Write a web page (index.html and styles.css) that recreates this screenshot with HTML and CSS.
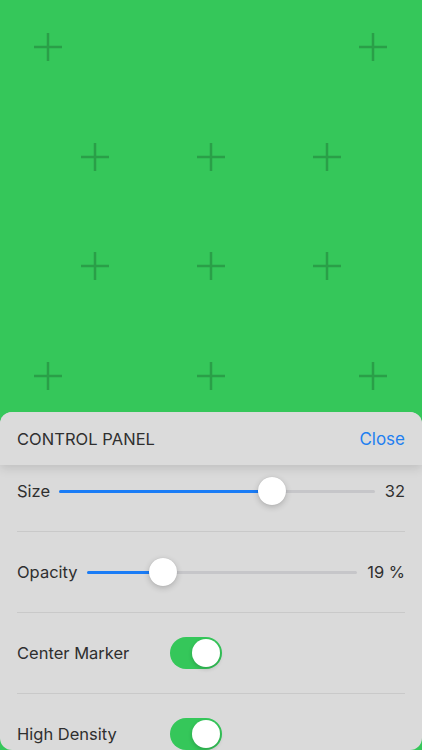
FILE: index.html
```html
<!DOCTYPE html>
<html>
<head>
<meta charset="utf-8">
<link rel="stylesheet" href="styles.css">
</head>
<body>
<div class="screen">
  <svg class="canvas" width="422" height="412" viewBox="0 0 422 412">
    <g class="plus">
      <path d="M34 47h28M48 33v28"/>
      <path d="M359 47h28M373 33v28"/>
      <path d="M81 157h28M95 143v28"/>
      <path d="M197 157h28M211 143v28"/>
      <path d="M313 157h28M327 143v28"/>
      <path d="M81 266h28M95 252v28"/>
      <path d="M197 266h28M211 252v28"/>
      <path d="M313 266h28M327 252v28"/>
      <path d="M34 376h28M48 362v28"/>
      <path d="M197 376h28M211 362v28"/>
      <path d="M359 376h28M373 362v28"/>
    </g>
  </svg>
  <div class="panel">
    <div class="header">
      <span class="title">CONTROL PANEL</span>
      <span class="close">Close</span>
    </div>
    <div class="rows">
      <div class="row row-first">
        <span class="label">Size</span>
        <div class="slider">
          <div class="track"><div class="fill" style="width:67.4%"></div></div>
          <div class="thumb" style="left:67.4%"></div>
        </div>
        <span class="value">32</span>
      </div>
      <div class="row">
        <span class="label">Opacity</span>
        <div class="slider">
          <div class="track"><div class="fill" style="width:28.2%"></div></div>
          <div class="thumb" style="left:28.2%"></div>
        </div>
        <span class="value">19 %</span>
      </div>
      <div class="row">
        <span class="label label-fixed">Center Marker</span>
        <div class="toggle"><div class="knob"></div></div>
      </div>
      <div class="row row-last">
        <span class="label label-fixed">High Density</span>
        <div class="toggle"><div class="knob"></div></div>
      </div>
    </div>
  </div>
</div>
</body>
</html>
```

FILE: styles.css
```css
html, body {
  margin: 0;
  padding: 0;
}
body {
  background: #35c75a;
  font-family: "Inter", "Liberation Sans", sans-serif;
  color: #2f2f2f;
}
.screen {
  width: 422px;
  height: 750px;
  overflow: hidden;
  display: flex;
  flex-direction: column;
}
.canvas {
  display: block;
  flex: none;
}
.plus path {
  stroke: #2a9f48;
  stroke-width: 2.5;
  fill: none;
}
.panel {
  flex: none;
  height: 338px;
  background: #dadada;
  border-radius: 12px;
  overflow: hidden;
  display: flex;
  flex-direction: column;
}
.header {
  position: relative;
  z-index: 1;
  height: 53px;
  flex: none;
  display: flex;
  align-items: center;
  justify-content: space-between;
  padding: 0 17px;
  background: #dbdbdb;
  box-shadow: 0 3px 10px rgba(0, 0, 0, 0.13);
  font-size: 16.5px;
}
.title {
  color: #2f2f2f;
  letter-spacing: 0.05px;
}
.close {
  color: #1f7ff0;
  font-size: 17px;
}
.rows {
  padding: 0 17px;
  display: flex;
  flex-direction: column;
}
.row {
  height: 80px;
  display: flex;
  align-items: center;
  border-bottom: 1px solid #c9c9c9;
  font-size: 16.5px;
}
.row-first {
  height: 66px;
  align-items: flex-start;
}
.row-first > * {
  margin-top: 14px;
}
.row-first .slider {
  margin-top: 12px;
}
.row-last {
  border-bottom: none;
}
.label {
  flex: none;
  line-height: 24px;
}
.label-fixed {
  width: 153px;
}
.value {
  flex: none;
  line-height: 24px;
}
.slider {
  flex: 1;
  position: relative;
  height: 28px;
  margin: 0 10px 0 9px;
  display: flex;
  align-items: center;
}
.track {
  width: 100%;
  height: 3px;
  border-radius: 2px;
  background: #c6c6c9;
  overflow: hidden;
}
.fill {
  height: 100%;
  background: #1a7cf6;
}
.thumb {
  position: absolute;
  top: 0;
  width: 28px;
  height: 28px;
  margin-left: -14px;
  border-radius: 50%;
  background: #ffffff;
  box-shadow: 0 2px 6px rgba(0, 0, 0, 0.2), 0 0 1px rgba(0, 0, 0, 0.15);
}
.toggle {
  width: 52px;
  height: 32px;
  border-radius: 16px;
  background: #35c75a;
  position: relative;
  flex: none;
}
.knob {
  position: absolute;
  right: 2px;
  top: 2px;
  width: 28px;
  height: 28px;
  border-radius: 50%;
  background: #ffffff;
  box-shadow: 0 2px 4px rgba(0, 0, 0, 0.18);
}
```
